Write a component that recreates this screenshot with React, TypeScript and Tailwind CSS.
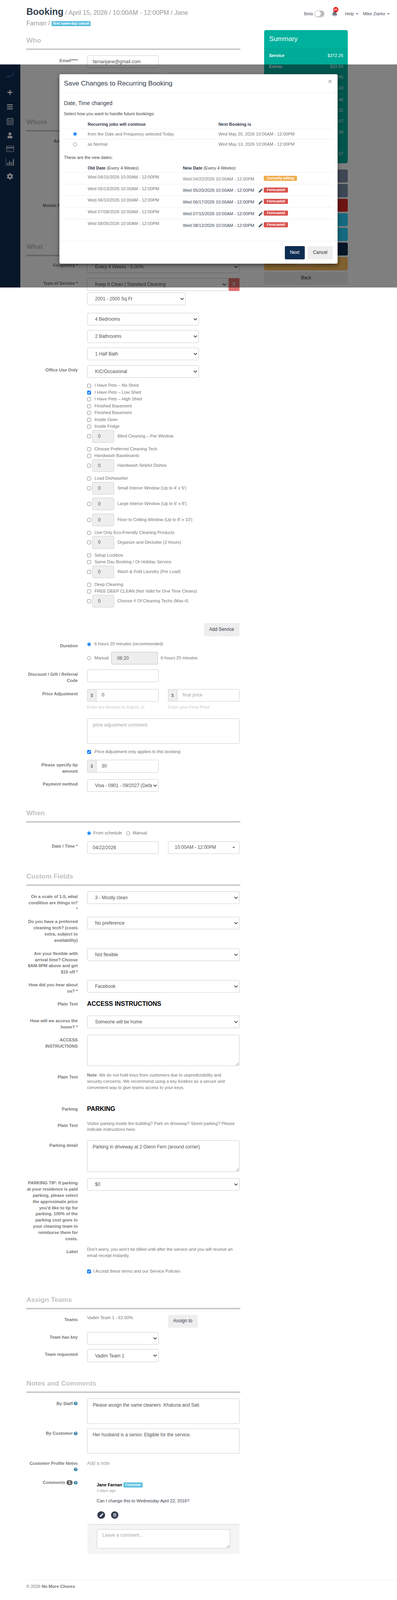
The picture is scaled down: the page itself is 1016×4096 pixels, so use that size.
import type { ReactNode } from "react";
import { FaBars, FaBell, FaCog, FaPen, FaPlus, FaQuestionCircle, FaRegTrashAlt, FaUser } from "react-icons/fa";

const labelCls = "w-[131.6px] shrink-0 pt-[5.55px] text-right text-[11.1px] font-bold leading-[15.86px] text-[#777]";
const fieldCls = "h-[32.1px] rounded-[3px] border border-[#ccc] bg-white text-[11.9px] text-[#555]";
const textCls = "text-[11.1px] leading-[15.86px] text-[#777]";

function Row({ label, className, children }: { label: ReactNode; className: string; children: ReactNode }) {
  return (
    <div className={`flex gap-[23.8px] ${className}`}>
      <div className={labelCls}>{label}</div>
      <div className="w-[390px] min-w-0">{children}</div>
    </div>
  );
}

function Section({ title, className }: { title: string; className: string }) {
  return (
    <div className={className}>
      <h2 className="mb-[11.1px] text-[17.4px] font-bold leading-[19px] text-[#c2c2c2]">{title}</h2>
      <div className="h-[4px] bg-[#cbcbc9]" />
    </div>
  );
}

function Sel({ value, className }: { value: string; className: string }) {
  return (
    <select defaultValue={value} className={`${fieldCls} block pl-[15.5px] ${className}`}>
      <option>{value}</option>
    </select>
  );
}

function Txt({ value, className }: { value: string; className: string }) {
  return <input readOnly defaultValue={value} className={`${fieldCls} block px-[13.5px] ${className}`} />;
}

function Money({ value, placeholder }: { value?: string; placeholder?: string }) {
  return (
    <div className="flex h-[32.5px] w-[183.2px]">
      <span className="flex w-[26.9px] items-center justify-center rounded-l-[3px] border border-r-0 border-[#ccc] bg-[#eee] text-[11.1px] text-[#555]">$</span>
      <input
        readOnly
        defaultValue={value}
        placeholder={placeholder}
        className="w-full min-w-0 rounded-r-[3px] border border-[#ccc] bg-white px-[13.5px] text-[11.9px] text-[#555] placeholder:text-[#aaa]"
      />
    </div>
  );
}

function Check({ label, checked }: { label: string; checked?: boolean }) {
  return (
    <label className={`flex h-[17.45px] items-center gap-[8.7px] ${textCls}`}>
      <input type="checkbox" defaultChecked={checked} className="h-[10.3px] w-[10.3px]" />
      {label}
    </label>
  );
}

function Qty({ label }: { label: string }) {
  return (
    <label className={`mb-[8.3px] flex h-[32.1px] items-center ${textCls}`}>
      <input type="checkbox" className="h-[10.3px] w-[10.3px]" />
      <input readOnly defaultValue="0" className="ml-[3.2px] h-full w-[55.5px] rounded-[3px] border border-[#ccc] bg-[#eee] pl-[13.5px] text-[11.9px] text-[#555]" />
      <span className="ml-[8.7px]">{label}</span>
    </label>
  );
}

function Help() {
  return <FaQuestionCircle className="inline-block h-[9.5px] w-[9.5px] align-[-1px] text-[#1d7497]" />;
}

function Caret() {
  return <span className="ml-[5px] inline-block h-0 w-0 border-x-[3.2px] border-t-[3.2px] border-x-transparent border-t-[#4a5260] align-middle" />;
}

function Badge({ children, className }: { children: ReactNode; className: string }) {
  return <span className={`inline-flex items-center justify-center rounded-[2px] text-[8.7px] font-bold text-white ${className}`}>{children}</span>;
}

const summaryRows = [
  ["Service", "$372.25"],
  ["Extras", "$33.50"],
  ["Discount", "($20.29)"],
  ["Tip", "$30.00"],
];
const summaryRows2 = [
  ["Subtotal", "$415.46"],
  ["Tax", "$27.11"],
  ["Total", "$442.57"],
  ["Paid", "$0.00"],
];

const summaryButtons = [
  ["Save", "bg-[#7b8fa9] text-white"],
  ["Save and Notify", "bg-[#7b8fa9] text-white"],
  ["Cancel Booking", "bg-[#dc2828] text-white"],
  ["Charge", "bg-[#2ad4ff] text-white"],
  ["Invoice", "bg-[#2ad4ff] text-white"],
  ["Reschedule", "bg-[#0f2d52] text-white"],
  ["Complete", "bg-[#ffc05c] text-white"],
  ["Back", "bg-[#eee] text-[#333]"],
];

const dateRows = [
  ["Wed 05/13/2026 10:00AM - 12:00PM", "Wed 05/20/2026 10:00AM - 12:00PM"],
  ["Wed 06/10/2026 10:00AM - 12:00PM", "Wed 06/17/2026 10:00AM - 12:00PM"],
  ["Wed 07/08/2026 10:00AM - 12:00PM", "Wed 07/15/2026 10:00AM - 12:00PM"],
  ["Wed 08/05/2026 10:00AM - 12:00PM", "Wed 08/12/2026 10:00AM - 12:00PM"],
];

function SideNav() {
  return (
    <div className="absolute left-0 top-[164.9px] flex h-[571px] w-[51.5px] flex-col items-center bg-[#0f2d52] pt-[15.9px] text-white">
      <svg viewBox="0 0 34 26" className="h-[19px] w-[26px]" fill="none">
        <path d="M32 1C30 14 18 22 1 19" stroke="#3f9fd0" strokeWidth="1" />
        <path d="M32 5C28 16 16 24 2 21" stroke="#2a86c4" strokeWidth="1" />
        <path d="M32 9C26 19 14 26 4 23" stroke="#1a6fb5" strokeWidth="1" />
        <circle cx="32" cy="1" r="1" fill="#3f9fd0" />
      </svg>
      <div className="mt-[26.5px] flex h-[20px] items-center"><FaPlus className="h-[15px] w-[15px]" /></div>
      <div className="mt-[17.3px] flex h-[20px] items-center"><FaBars className="h-[17px] w-[16.6px]" /></div>
      <div className="mt-[17.3px] flex h-[20px] items-center">
        <svg viewBox="0 0 22 24" className="h-[19px] w-[17.5px]" fill="none" stroke="currentColor" strokeWidth="1.4">
          <rect x="1" y="3" width="20" height="20" rx="1.5" />
          <path d="M1 8h20M1 13h20M1 18h20M6 8v15M11 8v15M16 8v15" strokeWidth="1" />
          <path d="M5.5 1v4M16.5 1v4" strokeWidth="2" />
        </svg>
      </div>
      <div className="mt-[15.7px] flex h-[20px] items-center"><FaUser className="h-[15px] w-[15px]" /></div>
      <div className="mt-[14.1px] flex h-[20px] items-center">
        <svg viewBox="0 0 25 20" className="h-[16px] w-[20px]" fill="none" stroke="currentColor" strokeWidth="1.4">
          <rect x="1" y="1" width="23" height="18" rx="1.5" />
          <path d="M1 6.5h23" strokeWidth="3" />
          <path d="M4 14.5h3M9 14.5h3" />
        </svg>
      </div>
      <div className="mt-[14.1px] flex h-[20px] items-center">
        <svg viewBox="0 0 28 24" className="h-[19px] w-[22px]" fill="currentColor">
          <path d="M0 0h1v23h28v1H0z" />
          <rect x="5" y="15" width="3" height="7" />
          <rect x="11" y="9" width="3" height="13" />
          <rect x="17" y="13" width="3" height="9" />
          <rect x="23" y="3" width="3" height="19" />
        </svg>
      </div>
      <div className="mt-[16.5px] flex h-[20px] items-center"><FaCog className="h-[17px] w-[17px]" /></div>
    </div>
  );
}

function Modal() {
  return (
    <div className="absolute left-[151.5px] top-[189.5px] z-20 flex h-[485.3px] w-[712px] flex-col rounded-[4px] bg-white shadow-[0_4px_12px_rgba(0,0,0,0.5)]">
      <div className="relative h-[48.4px] shrink-0 border-b border-[#e9ecef] px-[11.9px]">
        <h3 className="text-[17.2px] leading-[47.6px] text-[#343d4c]">Save Changes to Recurring Booking</h3>
        <span className="absolute right-[14px] top-[9px] text-[17px] font-bold leading-[20px] text-[#aaa]">×</span>
      </div>
      <div className="flex-1 px-[11.9px] pt-[17.4px]">
        <h4 className="text-[13.9px] leading-[19px] text-[#343d4c]">Date, Time changed</h4>
        <p className="mt-[9.5px] text-[11.1px] leading-[15.86px] text-[#444]">Select how you want to handle future bookings:</p>
        <div className="mt-[7.9px] flex h-[23px] items-center border-b border-[#e9ecef] text-[11.1px] font-bold text-[#343d4c]">
          <span className="ml-[61px] w-[334.6px]">Recurring jobs will continue</span>
          <span>Next Booking is</span>
        </div>
        <div className="flex h-[26px] items-center border-b border-[#e9ecef] text-[11.1px] text-[#777]">
          <input type="radio" name="future" defaultChecked className="ml-[23.4px] h-[10.3px] w-[10.3px]" />
          <span className="ml-[27.3px] w-[334.6px]">from the Date and Frequency selected Today</span>
          <span>Wed May 20, 2026 10:00AM - 12:00PM</span>
        </div>
        <div className="flex h-[26px] items-center text-[11.1px] text-[#777]">
          <input type="radio" name="future" className="ml-[23.4px] h-[10.3px] w-[10.3px]" />
          <span className="ml-[27.3px] w-[334.6px]">as Normal</span>
          <span>Wed May 13, 2026 10:00AM - 12:00PM</span>
        </div>
        <p className="mt-[13.5px] text-[11.1px] leading-[15.86px] text-[#444]">These are the new dates:</p>
        <div className="mt-[8px] flex h-[22.2px] items-center border-b border-[#e9ecef] text-[11.1px] text-[#444]">
          <span className="ml-[61px] w-[243.5px]"><b className="text-[#343d4c]">Old Date</b> (Every 4 Weeks)</span>
          <span><b className="text-[#343d4c]">New Date</b> (Every 4 Weeks)</span>
        </div>
        <div className="flex h-[29.7px] border-b border-[#e9ecef] text-[11.1px]">
          <span className="ml-[61px] mt-[4px] w-[243.5px] leading-[15.86px] text-[#777]">Wed 04/15/2026 10:00AM - 12:00PM</span>
          <span className="mt-[8.7px] leading-[15.86px] text-[#777]">Wed 04/22/2026 10:00AM - 12:00PM</span>
          <Badge className="ml-[24.5px] mt-[7.9px] h-[13.5px] w-[85px] bg-[#f0ad4e]">Currently editing</Badge>
        </div>
        {dateRows.map(([oldDate, newDate], i) => (
          <div key={oldDate} className={`flex h-[29.7px] text-[11.1px] ${i < 3 ? "border-b border-[#e9ecef]" : ""}`}>
            <span className="ml-[61px] mt-[4px] w-[243.5px] leading-[15.86px] text-[#777]">{oldDate}</span>
            <span className="mt-[8.7px] leading-[15.86px] text-[#3a4556]">{newDate}</span>
            <FaPen className="ml-[11px] mt-[11.5px] h-[10px] w-[10px] text-[#46505e]" />
            <Badge className="ml-[3px] mt-[7.9px] h-[13px] w-[62.6px] bg-[#d9534f]">Forecasted</Badge>
          </div>
        ))}
      </div>
      <div className="flex h-[58px] shrink-0 justify-end gap-[7.9px] border-t border-[#e9ecef] px-[11.9px] pt-[12.7px]">
        <button className="h-[33.3px] w-[50.8px] rounded-[3px] bg-[#0f2d52] text-[11.9px] text-white">Next</button>
        <button className="h-[33.3px] w-[64.2px] rounded-[3px] bg-[#eee] text-[11.9px] text-[#333]">Cancel</button>
      </div>
    </div>
  );
}

export default function App() {
  return (
    <div className="relative min-h-[4093px] w-[1016px] overflow-hidden bg-white [font-family:'Liberation_Sans',Arial,Helvetica,sans-serif]">
      <header className="flex h-[69.8px] justify-between pl-[67.4px] pr-[19px] pt-[15.9px]">
        <h1 className="text-[16.2px] leading-[27px] text-[#999]">
          <b className="text-[23.8px] text-[#343d4c]">Booking</b> / April 15, 2026 / 10:00AM - 12:00PM / Jane
          <br />
          Farnan /{" "}
          <span className="inline-flex h-[12.7px] w-[100px] items-center justify-center rounded-[2px] bg-[#5bc0de] align-[2px] text-[9.1px] font-bold leading-none text-white">first same-day cancel</span>
        </h1>
        <div className="mt-[9.5px] flex h-[19px] items-center text-[11.1px] text-[#4a5260]">
          <span>Beta</span>
          <span className="ml-[4.5px] flex h-[16.7px] w-[24.6px] items-center rounded-full bg-[#bdbdbd] pl-[1px] shadow-[0_2px_3px_rgba(0,0,0,0.15)]">
            <span className="h-[14.5px] w-[14.5px] rounded-full bg-white" />
          </span>
          <span className="relative ml-[19px] w-[15px]">
            <FaBell className="h-[15px] w-[15px] text-[#6f7680]" />
            <span className="absolute -top-[9px] left-[4px] flex h-[13px] w-[13px] items-center justify-center rounded-full bg-[#ee0000] text-[7.5px] font-bold text-white">65</span>
          </span>
          <span className="ml-[19px]">Help<Caret /></span>
          <span className="ml-[12px]">Mike Ziarko<Caret /></span>
        </div>
      </header>

      <div className="flex items-start pl-[67.4px]">
        <main className="w-[548px] shrink-0">
          <Section title="Who" className="mt-[24.6px]" />
          <Row label="Email****" className="mt-[13.5px]">
            <Txt value="farnanjane@gmail.com" className="h-[32.5px] w-[183.2px]" />
          </Row>
          <Row label="" className="mt-[11.9px]">
            <div className="flex gap-[23.8px]">
              <Txt value="" className="h-[32.5px] w-[183.2px]" />
              <Txt value="" className="h-[32.5px] w-[183.2px]" />
            </div>
          </Row>

          <Section title="Where" className="mt-[84.1px]" />
          <Row label="Address****" className="mt-[11.1px]">
            <Txt value="" className="h-[32.5px] w-[390px]" />
          </Row>
          <Row label="Mobile Phone****" className="mt-[132.4px]">
            <Txt value="" className="h-[32.5px] w-[183.2px]" />
          </Row>

          <Section title="What" className="mt-[76.1px]" />
          <Row label="Frequency *" className="mt-[11.1px]">
            <Sel value="Every 4 Weeks - 5.00%" className="h-[32.5px] w-[390px]" />
          </Row>
          <Row label="Type of Service *" className="mt-[12.7px]">
            <div className="flex justify-between">
              <Sel value="Keep It Clean | Standard Cleaning" className="h-[32.5px] w-[360px]" />
              <button className="h-[32.5px] w-[27.7px] rounded-[2px] bg-[#e07272] text-[11.9px] text-white">X</button>
            </div>
          </Row>
          <div className="ml-[155.4px]">
            <Sel value="2001 - 2500 Sq Ft" className="mt-[4px] h-[32.5px] w-[252px]" />
            <Sel value="4 Bedrooms" className="mt-[19.8px] h-[32.5px] w-[286.3px]" />
            <Sel value="2 Bathrooms" className="mt-[11.9px] h-[32.5px] w-[286.3px]" />
            <Sel value="1 Half Bath" className="mt-[12.7px] h-[32px] w-[286.3px]" />
          </div>
          <Row label="Office Use Only" className="mt-[12.3px]">
            <Sel value="KIC/Occasional" className="h-[32.1px] w-[286.3px]" />
          </Row>

          <div className="ml-[155.4px] mt-[11.9px]">
            <Check label="I Have Pets – No Shed" />
            <Check label="I Have Pets – Low Shed" checked />
            <Check label="I Have Pets – High Shed" />
            <Check label="Finished Basement" />
            <Check label="Finished Basement" />
            <Check label="Inside Oven" />
            <Check label="Inside Fridge" />
            <Qty label="Blind Cleaning – Per Window" />
            <Check label="Choose Preferred Cleaning Tech" />
            <Check label="Handwash Baseboards" />
            <Qty label="Handwash Sinkful Dishes" />
            <Check label="Load Dishwasher" />
            <Qty label="Small Interior Window (Up to 4' x 5')" />
            <Qty label="Large Interior Window (Up to 6' x 8')" />
            <Qty label="Floor to Ceiling Window (Up to 8' x 10')" />
            <Check label="Use Only Eco-Friendly Cleaning Products" />
            <Qty label="Organize and Declutter (2 Hours)" />
            <Check label="Setup Lockbox" />
            <Check label="Same Day Booking / Or Holiday Service" />
            <Qty label="Wash & Fold Laundry (Per Load)" />
            <Check label="Deep Cleaning" />
            <Check label="FREE DEEP CLEAN (Not Valid for One Time Cleans)" />
            <Qty label="Choose # Of Cleaning Techs (Max 4)" />
          </div>

          <div className="ml-[155.4px] mt-[39.6px] flex w-[390px] justify-end">
            <button className="h-[34.1px] w-[91.2px] rounded-[3px] bg-[#eee] text-[11.9px] text-[#343d4c]">Add Service</button>
          </div>

          <Row label="Duration" className="mt-[11.9px]">
            <label className={`flex h-[17.45px] items-center gap-[8.7px] ${textCls}`}>
              <input type="radio" name="duration" defaultChecked className="h-[10.3px] w-[10.3px]" />
              6 hours 20 minutes (recommended)
            </label>
          </Row>
          <div className={`ml-[155.4px] mt-[7.1px] flex h-[32.1px] items-center ${textCls}`}>
            <input type="radio" name="duration" className="h-[10.3px] w-[10.3px]" />
            <span className="ml-[8.7px]">Manual</span>
            <input readOnly defaultValue="06:20" className="ml-[7.1px] h-full w-[119px] rounded-[2px] border border-[#bbb] bg-[#eee] pl-[13.5px] text-[11.9px] text-[#555]" />
            <span className="ml-[7px]">6 hours 20 minutes</span>
          </div>
          <Row label={<>Discount / Gift / Referral<br />Code</>} className="mt-[12.7px]">
            <Txt value="" className="h-[32.5px] w-[183.2px]" />
          </Row>
          <Row label="Price Adjustment" className="mt-[12.7px]">
            <div className="flex gap-[23.8px]">
              <Money value="0" />
              <Money placeholder="final price" />
            </div>
            <div className="mt-[7.1px] flex gap-[23.8px] text-[11.1px] leading-[15.86px] text-[#ccc]">
              <span className="w-[183.2px]">Enter the Amount to Adjust, or</span>
              <span>Enter your Final Price</span>
            </div>
            <textarea
              readOnly
              placeholder="price adjustment comment"
              className="mt-[19.8px] block h-[65px] w-[390px] resize-none rounded-[3px] border border-[#ccc] px-[13.5px] pt-[8.7px] text-[11.9px] leading-[15.86px] placeholder:text-[#aaa]"
            />
            <div className="mt-[11.9px]"><Check label="Price Adjustment only applies to this booking" checked /></div>
          </Row>
          <Row label={<>Please specify tip<br />amount</>} className="mt-[11.9px]">
            <Money value="30" />
          </Row>
          <Row label="Payment method" className="mt-[11.9px]">
            <Sel value="Visa - 0901 - 09/2027 (Default)" className="h-[32.5px] w-[183.2px]" />
          </Row>

          <Section title="When" className="mt-[45.2px]" />
          <div className={`ml-[155.4px] mt-[18.2px] flex h-[17.45px] items-center ${textCls}`}>
            <input type="radio" name="when" defaultChecked className="h-[10.3px] w-[10.3px]" />
            <span className="ml-[5.6px]">From schedule</span>
            <input type="radio" name="when" className="ml-[11px] h-[10.3px] w-[10.3px]" />
            <span className="ml-[6.3px]">Manual</span>
          </div>
          <Row label="Date / Time *" className="mt-[11.9px]">
            <div className="flex gap-[23.8px]">
              <Txt value="04/22/2026" className="w-[183.2px]" />
              <div className={`${fieldCls} flex w-[183.2px] items-center justify-between pl-[16.5px] pr-[11px] text-[#333]`}>
                10:00AM - 12:00PM
                <span className="h-0 w-0 border-x-[3.2px] border-t-[3.2px] border-x-transparent border-t-[#333]" />
              </div>
            </div>
          </Row>

          <Section title="Custom Fields" className="mt-[48.4px]" />
          <Row label={<>On a scale of 1-5, what<br />condition are things in?<br />*</>} className="mt-[13.9px]">
            <Sel value="3 - Mostly clean" className="w-[390px]" />
          </Row>
          <Row label={<>Do you have a preferred<br />cleaning tech? (costs<br />extra, subject to<br />availability)</>} className="mt-[11.5px]">
            <Sel value="No preference" className="w-[390px]" />
          </Row>
          <Row label={<>Are your flexible with<br />arrival time? Choose<br />8AM-9PM above and get<br />$15 off *</>} className="mt-[12.3px]">
            <Sel value="Not flexible" className="w-[390px]" />
          </Row>
          <Row label={<>How did you hear about<br />us? *</>} className="mt-[11.5px]">
            <Sel value="Facebook" className="w-[390px]" />
          </Row>
          <Row label="Plain Text" className="mt-[11.9px]">
            <h3 className="text-[15.9px] font-bold leading-[23.8px] text-black">ACCESS INSTRUCTIONS</h3>
          </Row>
          <Row label={<>How will we access the<br />home? *</>} className="mt-[18.6px]">
            <Sel value="Someone will be home" className="w-[390px]" />
          </Row>
          <Row label={<>ACCESS<br />INSTRUCTIONS</>} className="mt-[11.9px]">
            <textarea readOnly className="block h-[80px] w-[390px] rounded-[3px] border border-[#ccc]" />
          </Row>
          <Row label="Plain Text" className="mt-[15.5px]">
            <p className={textCls}>
              <b>Note</b>: We do not hold keys from customers due to unpredictability and<br />
              security concerns. We recommend using a key lockbox as a secure and<br />
              convenient way to give teams access to your keys.
            </p>
          </Row>
          <Row label="Parking" className="mt-[34.1px]">
            <h3 className="text-[15.9px] font-bold leading-[23.8px] text-black">PARKING</h3>
          </Row>
          <Row label="Plain Text" className="mt-[18.2px]">
            <p className={textCls}>
              Visitor parking inside the building? Park on driveway? Street parking? Please<br />
              indicate instructions here.
            </p>
          </Row>
          <Row label="Parking detail" className="mt-[19px]">
            <textarea
              readOnly
              defaultValue="Parking in driveway at 2 Glenn Fern (around corner)"
              className="block h-[80.5px] w-[390px] rounded-[3px] border border-[#ccc] px-[13.5px] pt-[8.7px] text-[11.9px] leading-[15.86px] text-[#555]"
            />
          </Row>
          <Row
            label={<>PARKING TIP: If parking<br />at your residence is paid<br />parking, please select<br />the approximate price<br />you'd like to tip for<br />parking. 100% of the<br />parking cost goes to<br />your cleaning team to<br />reimburse them for<br />costs.</>}
            className="mt-[15.9px]"
          >
            <Sel value="$0" className="w-[390px]" />
          </Row>
          <Row label="Label" className="mt-[11.5px]">
            <p className={textCls}>
              Don't worry, you won't be billed until after the service and you will receive an<br />
              email receipt instantly.
            </p>
          </Row>
          <label className={`ml-[155.4px] mt-[23px] flex h-[17.45px] items-center gap-[5.6px] ${textCls}`}>
            <input type="checkbox" defaultChecked className="h-[10.3px] w-[10.3px]" />
            I Accept these terms and our Service Policies
          </label>

          <Section title="Assign Teams" className="mt-[54.7px]" />
          <Row label="Teams" className="mt-[13.5px]">
            <div className="flex">
              <span className={`w-[207px] ${textCls}`}>Vadim Team 1 - 62.50%</span>
              <button className="h-[33.3px] w-[76px] rounded-[3px] bg-[#eee] text-[11.9px] text-[#343d4c]">Assign to</button>
            </div>
          </Row>
          <Row label="Team has key" className="mt-[11.1px]">
            <Sel value="" className="w-[183.2px]" />
          </Row>
          <Row label="Team requested" className="mt-[12.3px]">
            <Sel value="Vadim Team 1" className="w-[183.2px]" />
          </Row>

          <Section title="Notes and Comments" className="mt-[45.6px]" />
          <Row label={<>By Staff <Help /></>} className="mt-[13.9px]">
            <textarea
              readOnly
              defaultValue="Please assign the same cleaners  Khatuna and Sati"
              className="block h-[64.6px] w-[390px] resize-none rounded-[3px] border border-[#ccc] px-[13.5px] pt-[8.7px] text-[11.9px] leading-[15.86px] text-[#555]"
            />
          </Row>
          <Row label={<>By Customer <Help /></>} className="mt-[11.9px]">
            <textarea
              readOnly
              defaultValue="Her husband is a senior. Eligible for the service."
              className="block h-[64.6px] w-[390px] resize-none rounded-[3px] border border-[#ccc] px-[13.5px] pt-[8.7px] text-[11.9px] leading-[15.86px] text-[#555]"
            />
          </Row>
          <Row label={<>Customer Profile Notes<br /><Help /></>} className="mt-[12.3px]">
            <p className="pt-[5.55px] text-[11.9px] leading-[15.86px] text-[#999]">Add a note</p>
          </Row>
          <Row
            label={
              <>
                Comments{" "}
                <span className="inline-block h-[13px] w-[16.6px] rounded-full bg-[#666] text-center text-[10px] leading-[13px] text-white">1</span>{" "}
                <Help />
              </>
            }
            className="mt-[11.9px]"
          >
            <div className="pl-[24.6px] pt-[11.1px]">
              <div className="flex h-[15.86px] items-center text-[11.1px] font-bold text-black">
                Jane Farnan
                <Badge className="ml-[3.2px] h-[13.5px] w-[49px] bg-[#5bc0de]">Customer</Badge>
              </div>
              <p className="text-[9.9px] leading-[12.7px] text-[#999]">2 days ago</p>
              <p className="mt-[12.7px] text-[11.1px] leading-[15.86px] text-[#343d4c]">Can I change this to Wednesday April 22, 2016?</p>
              <div className="ml-[2px] mt-[17.8px] flex gap-[14.4px]">
                <span className="flex h-[19.8px] w-[19.8px] items-center justify-center rounded-full bg-[#343d4f] text-white"><FaPen className="h-[9.5px] w-[9.5px]" /></span>
                <span className="flex h-[19.8px] w-[19.8px] items-center justify-center rounded-full bg-[#343d4f] text-white"><FaRegTrashAlt className="h-[9.5px] w-[9.5px]" /></span>
              </div>
            </div>
            <div className="ml-[1px] mt-[13.9px] border-y border-t-[#ccc] border-b-[#eee] bg-[#f4f4f4] px-[23.8px] py-[11.9px]">
              <textarea
                readOnly
                placeholder="Leave a comment..."
                className="block h-[49.2px] w-full rounded-[3px] border border-[#ccc] bg-white px-[13.5px] pt-[7px] text-[11.9px] leading-[15.86px] placeholder:text-[#aaa]"
              />
            </div>
          </Row>
        </main>

        <aside className="ml-[61px] mt-[7.1px] w-[214px] shrink-0">
          <div className="h-[341px] overflow-hidden rounded-[5px] bg-[#00ab98] text-[11.1px] leading-[15.86px] text-white">
            <h3 className="flex h-[46px] items-center bg-[#00b19d] pl-[12.7px] text-[17px]">Summary</h3>
            <div className="px-[12px] pt-[11.9px]">
              <div className="flex flex-col gap-[11.9px]">
                {summaryRows.map(([k, v]) => (
                  <div key={k} className="flex justify-between"><b>{k}</b><span>{v}</span></div>
                ))}
              </div>
              <div className="mb-[4.8px] mt-[7.9px] h-px bg-white/20" />
              <div className="flex flex-col gap-[11.9px]">
                {summaryRows2.map(([k, v]) => (
                  <div key={k} className="flex justify-between"><b>{k}</b><span>{v}</span></div>
                ))}
              </div>
              <div className="mb-[20.6px] mt-[17.4px] h-px bg-white/20" />
              <div className="flex justify-between"><b>Balance</b><span>$442.57</span></div>
            </div>
          </div>
          <div className="mt-[15.9px] flex flex-col gap-[4px]">
            {summaryButtons.map(([name, cls]) => (
              <button key={name} className={`h-[33.4px] rounded-[4px] text-[11.9px] ${cls}`}>{name}</button>
            ))}
          </div>
        </aside>
      </div>

      <footer className="ml-[67.4px] mt-[67.4px] border-t border-[#eee] pt-[8.7px] text-[11.1px] leading-[15.86px] text-[#777]">
        © 2026 <b>No More Chores</b>
      </footer>

      <SideNav />
      <div className="absolute left-0 top-[164.9px] z-10 h-[571px] w-full bg-black/50" />
      <Modal />
    </div>
  );
}
